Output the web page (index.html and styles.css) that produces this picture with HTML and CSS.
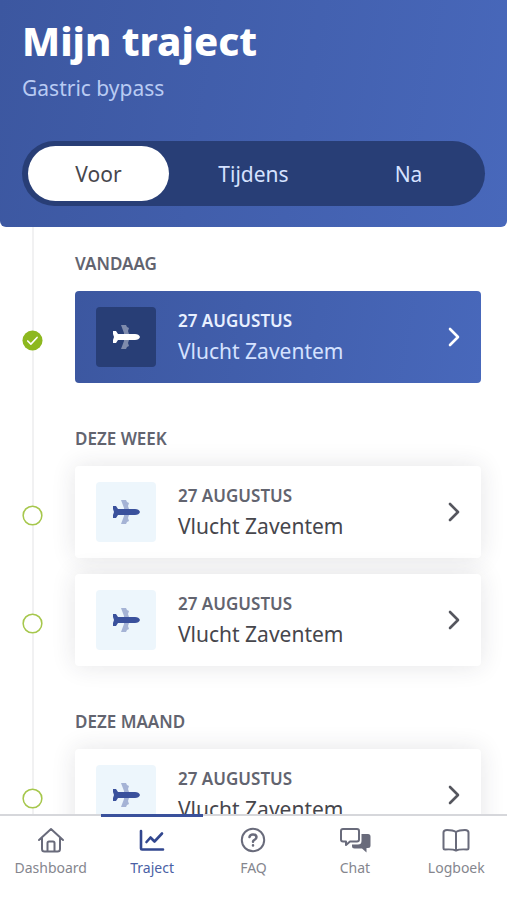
FILE: index.html
```html
<!DOCTYPE html>
<html lang="nl">
<head>
<meta charset="utf-8">
<meta name="viewport" content="width=device-width, initial-scale=1">
<title>Mijn traject</title>
<link rel="stylesheet" href="styles.css">
</head>
<body>
<svg class="defs" aria-hidden="true">
  <symbol id="plane" viewBox="0 0 28 26">
    <path class="wing" d="M9 1h5l1 2 2 1-1 3 1 3v6l-1 3 1 3-2 1-1 2H9l3-8V9z"/>
    <path d="M1 7h3l2 3h17q4 0 5 3-1 3-5 3H6l-2 3H1v-3l1-3-1-3z"/>
  </symbol>
  <symbol id="chevron" viewBox="0 0 12 20">
    <path d="M2 2l8 8-8 8" fill="none" stroke="currentColor" stroke-width="2.600" stroke-linecap="round" stroke-linejoin="round"/>
  </symbol>
</svg>

<header class="header">
  <h1 class="title">Mijn traject</h1>
  <p class="subtitle">Gastric bypass</p>
  <div class="phases">
    <button class="phase phase-active" type="button" aria-pressed="true">Voor</button>
    <button class="phase" type="button" aria-pressed="false">Tijdens</button>
    <button class="phase" type="button" aria-pressed="false">Na</button>
  </div>
</header>

<main class="timeline">
  <section class="group">
    <h2 class="group-title">Vandaag</h2>
    <div class="entry">
      <svg class="node" viewBox="0 0 22 22"><circle cx="11" cy="11" r="10.500" fill="#8db81f"/><path d="M6 11.500l3.300 3.300 6.500-7" fill="none" stroke="#fff" stroke-width="1.700" stroke-linecap="round" stroke-linejoin="round"/></svg>
      <a class="card card-today" href="#vlucht-1">
        <span class="badge"><svg class="plane"><use href="#plane"/></svg></span>
        <span class="details"><span class="date">27 AUGUSTUS</span><span class="name">Vlucht Zaventem</span></span>
        <svg class="chevron"><use href="#chevron"/></svg>
      </a>
    </div>
  </section>
  <section class="group">
    <h2 class="group-title">Deze week</h2>
    <div class="entry">
      <svg class="node" viewBox="0 0 22 22"><circle cx="11" cy="11" r="9.800" fill="#fff" stroke="#a6c74c" stroke-width="1.600"/></svg>
      <a class="card" href="#vlucht-2">
        <span class="badge"><svg class="plane"><use href="#plane"/></svg></span>
        <span class="details"><span class="date">27 AUGUSTUS</span><span class="name">Vlucht Zaventem</span></span>
        <svg class="chevron"><use href="#chevron"/></svg>
      </a>
    </div>
    <div class="entry">
      <svg class="node" viewBox="0 0 22 22"><circle cx="11" cy="11" r="9.800" fill="#fff" stroke="#a6c74c" stroke-width="1.600"/></svg>
      <a class="card" href="#vlucht-3">
        <span class="badge"><svg class="plane"><use href="#plane"/></svg></span>
        <span class="details"><span class="date">27 AUGUSTUS</span><span class="name">Vlucht Zaventem</span></span>
        <svg class="chevron"><use href="#chevron"/></svg>
      </a>
    </div>
  </section>
  <section class="group">
    <h2 class="group-title">Deze maand</h2>
    <div class="entry">
      <svg class="node" viewBox="0 0 22 22"><circle cx="11" cy="11" r="9.800" fill="#fff" stroke="#a6c74c" stroke-width="1.600"/></svg>
      <a class="card" href="#vlucht-4">
        <span class="badge"><svg class="plane"><use href="#plane"/></svg></span>
        <span class="details"><span class="date">27 AUGUSTUS</span><span class="name">Vlucht Zaventem</span></span>
        <svg class="chevron"><use href="#chevron"/></svg>
      </a>
    </div>
  </section>
</main>

<nav class="tabs">
  <a class="tab" href="#dashboard">
    <svg class="tab-icon" viewBox="0 0 32 28"><path d="M4 14L16 3l12 11M7 12v11q0 2.500 2.500 2.500h13q2.500 0 2.500-2.500V12M12.500 25v-8q0-1.500 1.500-1.500h4q1.500 0 1.500 1.500v8"/></svg>
    Dashboard
  </a>
  <a class="tab tab-active" href="#traject">
    <svg class="tab-icon" viewBox="0 0 32 28"><path class="bold" d="M5 5v17.500q0 1 1 1h21M10.500 16l4-4.500 4 4L26 7.500"/></svg>
    Traject
  </a>
  <a class="tab" href="#faq">
    <svg class="tab-icon" viewBox="0 0 32 28"><circle cx="16" cy="14" r="11.200"/><path class="medium" d="M12.500 11q.5-2.500 3.500-2.500t3.500 2.500q0 2-2 2.800-1.500.6-1.500 1.900M16 19.300v.2"/></svg>
    FAQ
  </a>
  <a class="tab" href="#chat">
    <svg class="tab-icon" viewBox="0 0 32 28"><path class="solid" d="M22.500 8H29q2.500 0 2.500 2.500v9q0 2.500-2.500 2.500h-1.500v4.500L23 22.500h-7.500q-2.500 0-2.500-2.500v-1.500h6q3.500 0 3.500-3.500z"/><path d="M4 3h14q2 0 2 2v8.500q0 2-2 2h-7L7 19v-3.500H4q-2 0-2-2V5q0-2 2-2z"/></svg>
    Chat
  </a>
  <a class="tab" href="#logboek">
    <svg class="tab-icon" viewBox="0 0 32 28"><path d="M16 6q-3-2-9-2-3.500 0-3.500 2.500V22q0 1.500 1.500 1.500 8-.5 11 1 3-1.500 11-1 1.500 0 1.500-1.500V6.500Q28.500 4 25 4q-6 0-9 2v18"/></svg>
    Logboek
  </a>
</nav>
</body>
</html>
```
FILE: styles.css
```css
* {
  box-sizing: border-box;
}

body {
  margin: 0;
  height: 100vh;
  display: flex;
  flex-direction: column;
  overflow: hidden;
  background: #fff;
  color: #46464c;
  font-family: "Noto Sans", sans-serif;
}

.defs {
  position: absolute;
  width: 0;
  height: 0;
}

.header {
  flex: none;
  padding: 15px 22px 21px;
  border-radius: 0 0 6px 6px;
  background: linear-gradient(100deg, #3c57a0, #4868bb);
  color: #fff;
}

.title {
  margin: 0;
  font-size: 40px;
  line-height: 52px;
  font-weight: 800;
}

.subtitle {
  margin: 5px 0 37px;
  font-size: 21px;
  line-height: 32px;
  font-weight: 400;
  color: #b9cbf3;
}

.phases {
  display: grid;
  grid-template-columns: repeat(3, 1fr);
  gap: 14px;
  padding: 5px 6px;
  border-radius: 33px;
  background: #283e76;
}

.phase {
  height: 55px;
  padding: 0;
  border: 0;
  border-radius: 28px;
  background: none;
  color: #d5e2ff;
  font: inherit;
  font-size: 21px;
}

.phase-active {
  background: #fff;
  color: #46464c;
}

.timeline {
  flex: 1;
  min-height: 0;
  overflow: hidden;
  padding: 25px 26px 0 22px;
  background: linear-gradient(#f1f1f2, #f1f1f2) 32px 0 / 2px 100% no-repeat;
}

.group {
  margin-bottom: 44px;
}

.group-title {
  margin: 0 0 15px 53px;
  font-size: 17px;
  line-height: 24px;
  font-weight: 600;
  text-transform: uppercase;
  color: #62646f;
}

.entry {
  display: grid;
  grid-template-columns: 21px 1fr;
  gap: 32px;
  align-items: center;
  margin-bottom: 16px;
}

.node {
  width: 21px;
  height: 21px;
  margin-top: 6px;
}

.card {
  display: flex;
  align-items: center;
  gap: 22px;
  padding: 16px 21px;
  border-radius: 4px;
  background: #fff;
  box-shadow: 0 0 24px rgba(40, 40, 60, 0.12);
  color: #46464c;
  text-decoration: none;
}

.badge {
  flex: none;
  display: grid;
  place-items: center;
  width: 60px;
  height: 60px;
  border-radius: 4px;
  background: #edf6fc;
  color: #3a519c;
}

.plane {
  width: 28px;
  height: 26px;
  fill: currentColor;
}

.wing {
  opacity: 0.4;
}

.details {
  flex: 1;
  display: grid;
}

.date {
  font-size: 17px;
  line-height: 28px;
  font-weight: 600;
  color: #62646f;
}

.name {
  font-size: 21px;
  line-height: 32px;
}

.chevron {
  flex: none;
  width: 12px;
  height: 20px;
  color: #55565e;
}

.card-today {
  background: linear-gradient(100deg, #3c57a0, #4868bb);
  box-shadow: none;
  color: #d5e2ff;
}

.card-today .badge {
  background: #283e76;
  color: #fff;
}

.card-today .date {
  color: #e8f0ff;
}

.card-today .chevron {
  color: #fff;
}

.tabs {
  flex: none;
  position: relative;
  display: grid;
  grid-template-columns: repeat(5, 1fr);
  height: 86px;
  border-top: 2px solid #d6d7db;
  background: #fff;
}

.tab {
  display: flex;
  flex-direction: column;
  align-items: center;
  gap: 4px;
  margin-top: -2px;
  padding-top: 9px;
  border-top: 3px solid transparent;
  color: #85868e;
  font-size: 14px;
  line-height: 20px;
  text-decoration: none;
}

.tab-active {
  border-color: #3a519c;
  color: #4a5fa5;
}

.tab-icon {
  width: 32px;
  height: 28px;
  fill: none;
  stroke: #696b7b;
  stroke-width: 2;
  stroke-linecap: round;
  stroke-linejoin: round;
}

.tab-active .tab-icon {
  stroke: #32478f;
}

.tab-icon .medium {
  stroke-width: 2.5;
}

.tab-icon .bold {
  stroke-width: 2.6;
}

.tab-icon .solid {
  fill: #696b7b;
  stroke: none;
}
```
